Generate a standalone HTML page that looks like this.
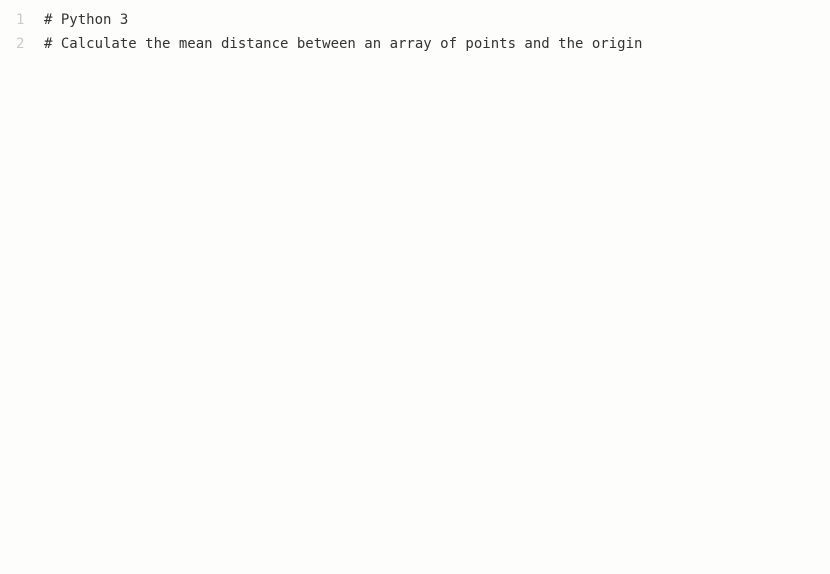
<!DOCTYPE html>
<html><head><meta charset="utf-8"><style>
html,body{margin:0;padding:0;width:830px;height:574px;background:#fdfdfb;overflow:hidden}
.l{position:absolute;font-family:"DejaVu Sans Mono","Liberation Mono",monospace;font-size:14px;line-height:24px;white-space:pre}
.n{color:#cacaca;left:16px}
.c{color:#333;left:44px}
</style></head><body>
<div class="l n" style="top:8px">1</div>
<div class="l c" style="top:8px"># Python 3</div>
<div class="l n" style="top:32px">2</div>
<div class="l c" style="top:32px"># Calculate the mean distance between an array of points and the origin</div>
</body></html>
